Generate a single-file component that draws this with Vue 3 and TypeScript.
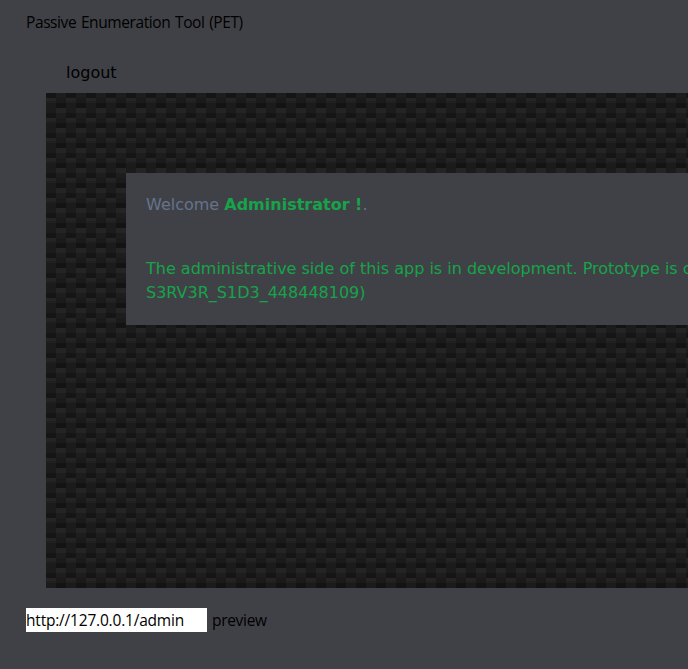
<script setup lang="ts">
import { ref } from 'vue'

const address = ref('http://127.0.0.1/admin')
const role = 'Administrator !'
</script>

<template>
  <div class="page">
    <header class="title">Passive Enumeration Tool (PET)</header>
    <section class="preview">
      <nav class="nav"><a class="logout">logout</a></nav>
      <main class="carbon">
        <div class="card">
          <p class="welcome">Welcome <strong>{{ role }}</strong>.</p>
          <p class="notice">The administrative side of this app is in development. Prototype is c<br />S3RV3R_S1D3_448448109)</p>
        </div>
      </main>
    </section>
    <form class="address-bar" @submit.prevent>
      <input v-model="address" class="address" type="text" spellcheck="false" />
      <button class="submit" type="submit">preview</button>
    </form>
  </div>
</template>

<style>
body {
  background: #404146;
  overflow: hidden;
}
</style>

<style scoped>
.page {
  box-sizing: border-box;
  height: 669px;
  padding: 10px 0 0 26px;
  overflow: hidden;
  background: #404146;
  color: #000;
  font: 15.5px/24px "Open Sans", "Noto Sans", sans-serif;
}

.title {
  white-space: nowrap;
  letter-spacing: -0.4px;
  word-spacing: 1px;
}

.preview {
  padding: 27px 0 0 20px;
  font-family: "DejaVu Sans", sans-serif;
  font-size: 16px;
}

.nav {
  height: 32px;
  padding-left: 20px;
}

.carbon {
  box-sizing: border-box;
  height: 495px;
  padding: 80px 0 0 80px;
  background:
    conic-gradient(from 0deg at 10px 5px, transparent 270deg, #151515 270deg) 0 0 / 20px 20px,
    conic-gradient(from 0deg at 10px 8px, transparent 270deg, #242424 270deg) 0 0 / 20px 20px,
    conic-gradient(from 0deg at 10px 10px, transparent 270deg, #202020 270deg) 0 0 / 20px 20px,
    linear-gradient(90deg, #1b1b1b 10px, transparent 10px) 0 0 / 20px 20px,
    linear-gradient(#1d1d1d 5px, #1a1a1a 5px, #1a1a1a 10px, #131313 10px, #131313 15px, #242424 15px) 0 0 / 20px 20px;
}

.card {
  box-sizing: border-box;
  height: 152px;
  padding: 20px;
  background: #404146;
  white-space: nowrap;
}

.welcome,
.notice {
  margin: 0;
}

.welcome {
  color: #64748b;
}

.welcome strong,
.notice {
  color: #16a34a;
}

.notice {
  margin-top: 40px;
}

.address-bar {
  display: flex;
  gap: 5px;
  margin-top: 20px;
}

.address,
.submit {
  height: 24px;
  padding: 0;
  border: 0;
  font: inherit;
  color: #000;
}

.address {
  width: 181px;
  background: #fff;
  outline: 0;
  letter-spacing: -0.2px;
}

.submit {
  background: transparent;
  letter-spacing: -0.3px;
}
</style>
